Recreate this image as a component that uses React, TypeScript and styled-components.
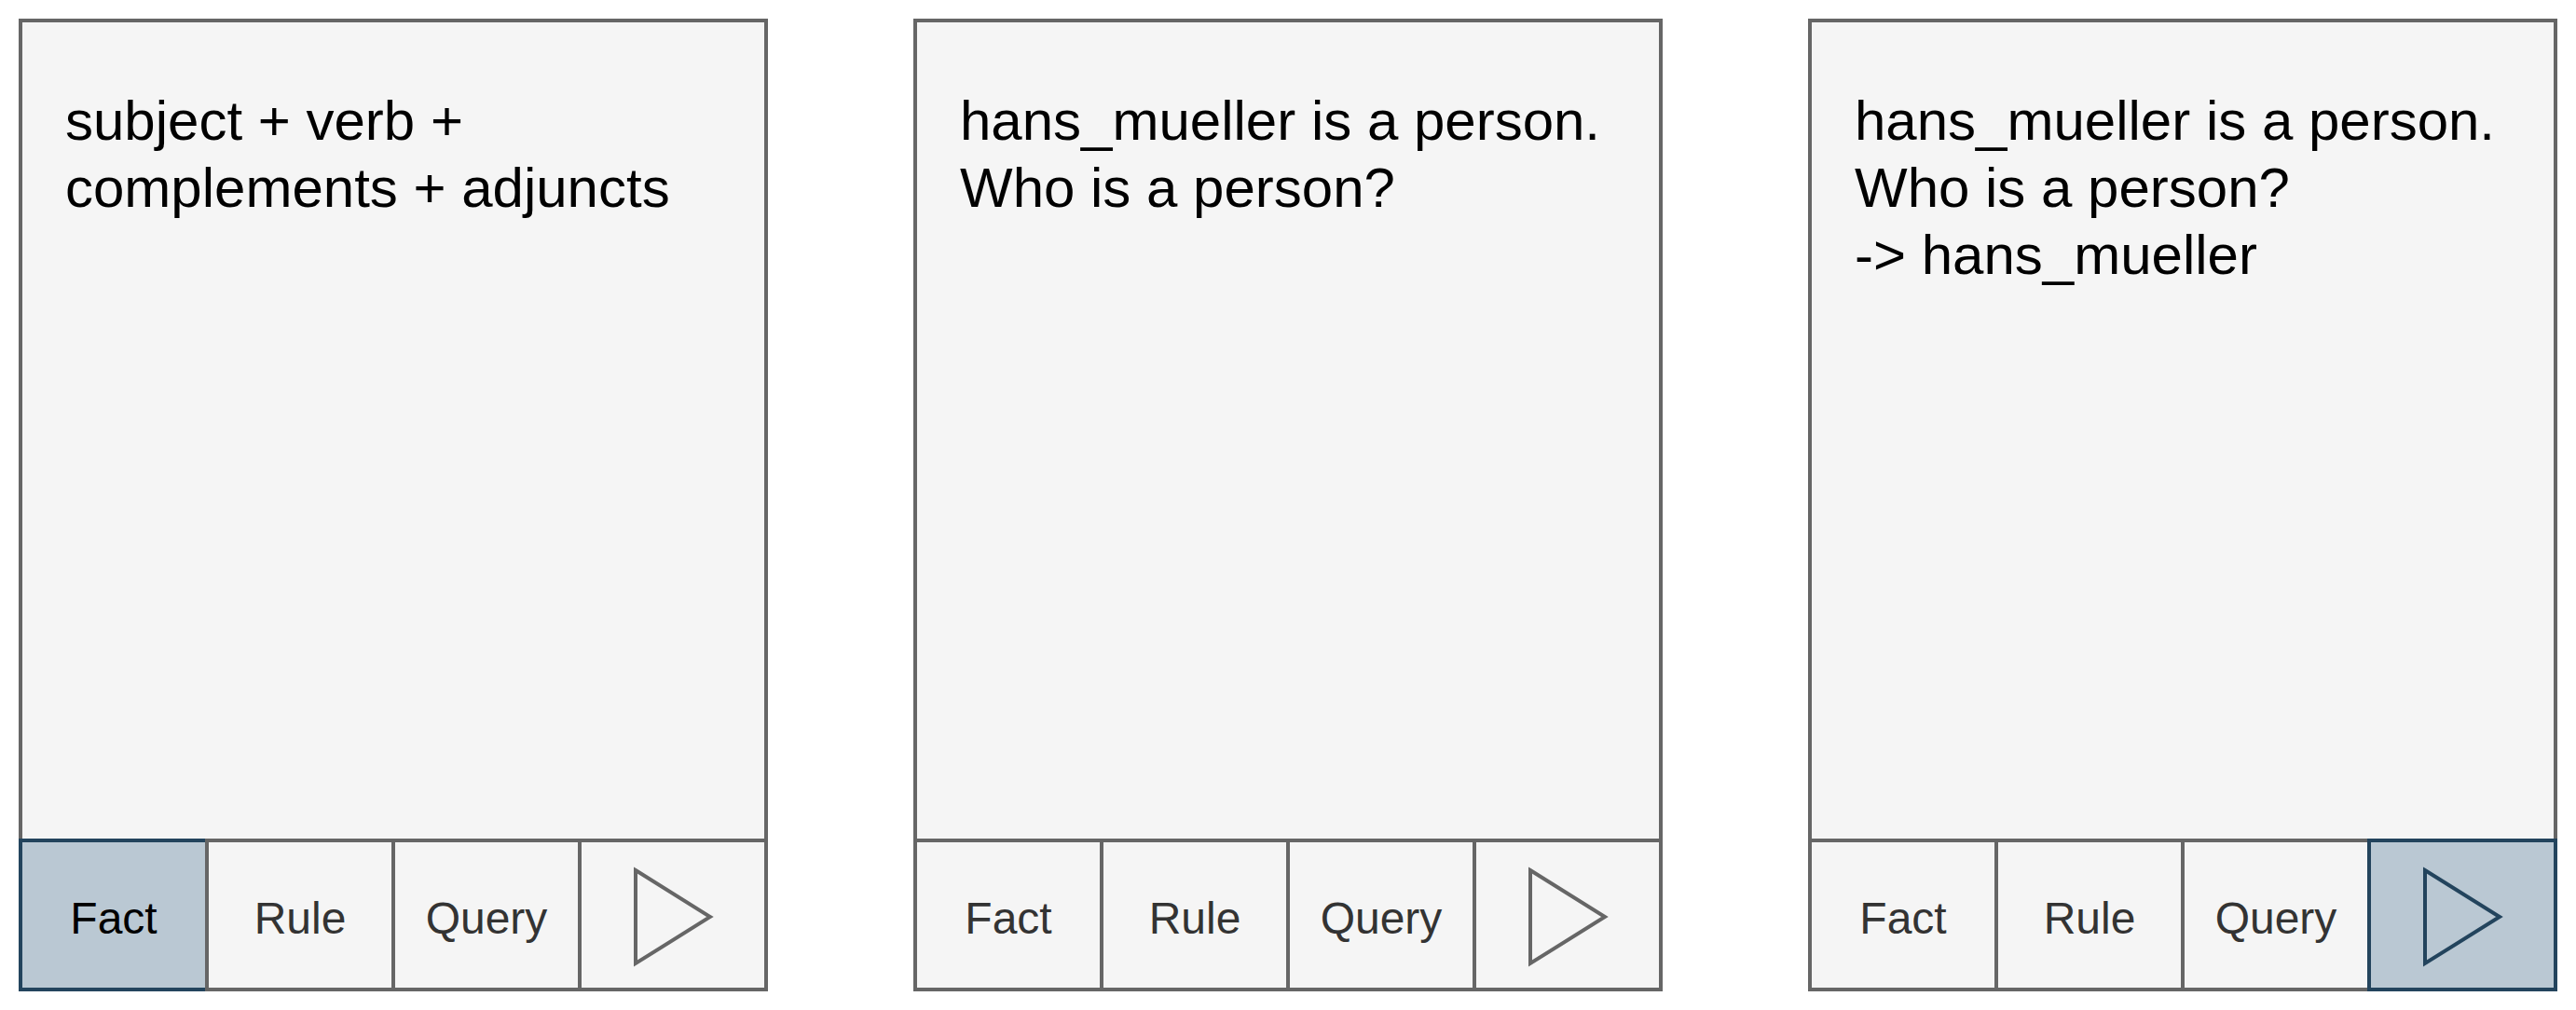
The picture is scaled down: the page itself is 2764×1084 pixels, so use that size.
import React from "react";
import styled, { createGlobalStyle } from "styled-components";

const color = {
  line: "#666666",
  surface: "#f5f5f5",
  label: "#333333",
  activeLine: "#23445d",
  activeSurface: "#bac8d3",
  text: "#000000",
};

const GlobalStyle = createGlobalStyle`
  *, *::before, *::after {
    box-sizing: border-box;
  }

  body {
    margin: 0;
    background: #ffffff;
    font-family: "Liberation Sans", Arial, Helvetica, sans-serif;
  }
`;

const Page = styled.main`
  display: flex;
  gap: 156px;
  min-height: 100vh;
  padding: 20px;
`;

const Panel = styled.section`
  display: flex;
  flex: 1 1 0;
  flex-direction: column;
  min-width: 0;
`;

const Screen = styled.div`
  flex: 1;
  padding: 70px 46px;
  border: 4px solid ${color.line};
  background: ${color.surface};
`;

const Message = styled.p`
  margin: 0;
  color: ${color.text};
  font-size: 60px;
  line-height: 72px;
  white-space: pre-line;
`;

const Toolbar = styled.div`
  display: flex;
  margin-top: -4px;
`;

const ToolButton = styled.button<{ $active: boolean }>`
  display: flex;
  flex: 1 1 0;
  align-items: center;
  justify-content: center;
  min-width: 0;
  height: 164px;
  padding: 4px 0 0;
  border: 4px solid ${(p) => (p.$active ? color.activeLine : color.line)};
  border-radius: 0;
  background: ${(p) => (p.$active ? color.activeSurface : color.surface)};
  color: ${(p) => (p.$active ? color.text : color.label)};
  font-family: inherit;
  font-size: 48px;
  line-height: 56px;
  cursor: pointer;

  & + & {
    margin-left: -4px;
  }
`;

const ButtonLabel = styled.span`
  padding-top: 4px;
`;

const PlayIcon = styled.svg<{ $active: boolean }>`
  display: block;
  width: 80px;
  height: 100px;
  overflow: visible;
  fill: none;
  stroke: ${(p) => (p.$active ? color.activeLine : color.line)};
  stroke-width: 4;
  stroke-miterlimit: 10;
`;

type Action = "Fact" | "Rule" | "Query" | "Run";

const actions: Action[] = ["Fact", "Rule", "Query", "Run"];

const steps: { lines: string[]; active?: Action }[] = [
  {
    lines: ["subject + verb +", "complements + adjuncts"],
    active: "Fact",
  },
  {
    lines: ["hans_mueller is a person.", "Who is a person?"],
  },
  {
    lines: ["hans_mueller is a person.", "Who is a person?", "-> hans_mueller"],
    active: "Run",
  },
];

function Console({ lines, active }: { lines: string[]; active?: Action }) {
  return (
    <Panel>
      <Screen>
        <Message>{lines.join("\n")}</Message>
      </Screen>
      <Toolbar role="toolbar">
        {actions.map((action) => {
          const isActive = action === active;
          return (
            <ToolButton
              key={action}
              type="button"
              $active={isActive}
              aria-pressed={isActive}
              aria-label={action}
            >
              {action === "Run" ? (
                <PlayIcon $active={isActive} viewBox="0 0 80 100" aria-hidden="true">
                  <path d="M0 0 L80 50 L0 100 Z" />
                </PlayIcon>
              ) : (
                <ButtonLabel>{action}</ButtonLabel>
              )}
            </ToolButton>
          );
        })}
      </Toolbar>
    </Panel>
  );
}

export default function App() {
  return (
    <>
      <GlobalStyle />
      <Page>
        {steps.map((step, index) => (
          <Console key={index} lines={step.lines} active={step.active} />
        ))}
      </Page>
    </>
  );
}
